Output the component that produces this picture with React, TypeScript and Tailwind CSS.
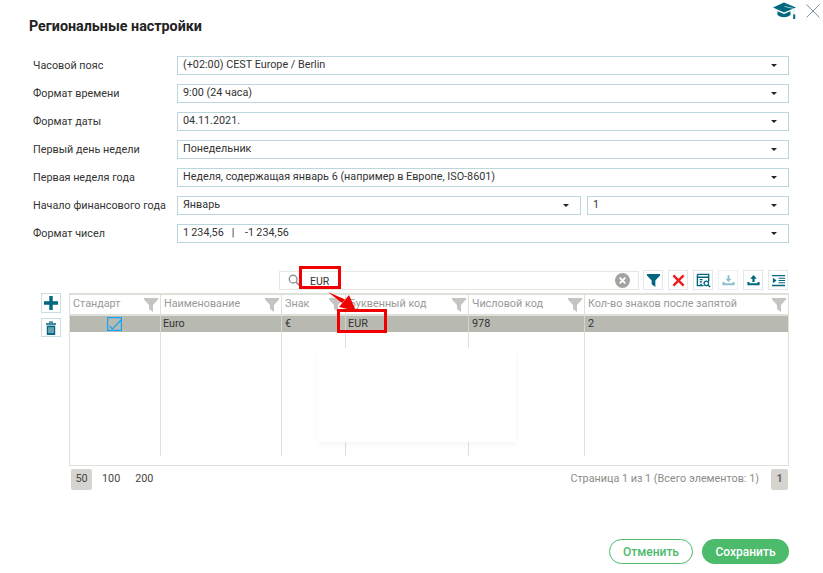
const labelClass = "w-[144px] shrink-0 text-[10.8px] leading-[19px] text-[#333]";

const SelectBox = ({ value, className = "flex-1" }: { value: string; className?: string }) => (
  <div className={`flex h-[19px] items-center justify-between border border-[#bcd6de] pl-[5px] pr-[11px] text-[10.8px] text-[#333] ${className}`}>
    <span className="whitespace-pre">{value}</span>
    <span className="h-0 w-0 border-x-[3px] border-t-[3px] border-x-transparent border-t-[#222]" />
  </div>
);

const settings = [
  { label: "Часовой пояс", value: "(+02:00) CEST Europe / Berlin" },
  { label: "Формат времени", value: "9:00 (24 часа)" },
  { label: "Формат даты", value: "04.11.2021." },
  { label: "Первый день недели", value: "Понедельник" },
  { label: "Первая неделя года", value: "Неделя, содержащая январь 6 (например в Европе, ISO-8601)" },
];

const FunnelIcon = ({ className }: { className: string }) => (
  <svg viewBox="0 0 14 14" className={className}>
    <path d="M0 0h14v1.5L9 7v7L5 11V7L0 1.5z" fill="currentColor" />
  </svg>
);

const ToolButton = ({ children, className = "border-[#e3e9e9]" }: { children: React.ReactNode; className?: string }) => (
  <button type="button" className={`flex h-[20px] w-[20px] items-center justify-center border bg-white ${className}`}>
    {children}
  </button>
);

const columns = [
  { title: "Стандарт", width: "w-[90px]" },
  { title: "Наименование", width: "w-[121px]" },
  { title: "Знак", width: "w-[64px]" },
  { title: "Буквенный код", width: "w-[123px]" },
  { title: "Числовой код", width: "w-[116px]" },
  { title: "Кол-во знаков после запятой", width: "flex-1" },
];

const Toolbar = () => (
  <div className="ml-[279px] flex h-[20px] w-[510px] items-center">
    <div className="flex h-[19px] w-[360px] items-center border border-[#e6e6e2] pl-[8px] pr-[8px]">
      <svg viewBox="0 0 14 14" className="h-[12px] w-[12px] text-[#8f8f8f]">
        <circle cx="6" cy="6" r="4.5" fill="none" stroke="currentColor" strokeWidth="1.6" />
        <path d="M9.5 9.5 13 13" stroke="currentColor" strokeWidth="2" />
      </svg>
      <span className="ml-[10px] flex-1 pt-[4px] text-[10.5px] text-[#333]">EUR</span>
      <svg viewBox="0 0 16 16" className="h-[15px] w-[15px]">
        <circle cx="8" cy="8" r="8" fill="#a3a3a0" />
        <path d="m5 5 6 6m0-6-6 6" stroke="#fff" strokeWidth="2" />
      </svg>
    </div>
    <div className="ml-[4px] flex gap-[5px]">
      <ToolButton>
        <FunnelIcon className="h-[13px] w-[13px] text-[#00677f]" />
      </ToolButton>
      <ToolButton>
        <svg viewBox="0 0 14 14" className="h-[13px] w-[13px]">
          <path d="m1.5 1.5 11 11m0-11-11 11" stroke="#ee1c1c" strokeWidth="2.6" />
        </svg>
      </ToolButton>
      <ToolButton>
        <svg viewBox="0 0 16 16" className="h-[15px] w-[15px] text-[#00677f]">
          <path d="M1.5 1.5h12V9M1.5 1.5v12H8M1.5 4.5h12" fill="none" stroke="currentColor" strokeWidth="1.5" />
          <path d="M4 7h3M4 9.5h2.5M4 12h2.5" stroke="currentColor" strokeWidth="1.2" />
          <circle cx="11" cy="11" r="2.4" fill="none" stroke="currentColor" strokeWidth="1.3" />
          <path d="m12.8 12.8 2.2 2.2" stroke="currentColor" strokeWidth="1.5" />
        </svg>
      </ToolButton>
      <ToolButton className="border-[#edf1f1]">
        <svg viewBox="0 0 16 16" className="h-[15px] w-[15px] text-[#8cc0cc]">
          <path d="M8 9.5 4.8 6H7V2.5h2V6h2.2z" fill="currentColor" />
          <path d="M1.5 9.5v3.5h13V9.5h-2.2v1.5H3.7V9.5z" fill="currentColor" />
        </svg>
      </ToolButton>
      <ToolButton>
        <svg viewBox="0 0 16 16" className="h-[15px] w-[15px] text-[#00677f]">
          <path d="M8 2 11.5 6H9.2v3.5H6.8V6H4.5z" fill="currentColor" />
          <path d="M1.5 9.5v3.5h13V9.5h-2.2v1.5H3.7V9.5z" fill="currentColor" />
        </svg>
      </ToolButton>
      <ToolButton>
        <svg viewBox="0 0 16 16" className="h-[15px] w-[15px] text-[#00677f]">
          <path d="M1 2h14v1.5H1zM1 12.5h14V14H1zM8 5h7v1.2H8zM8 7.4h7v1.2H8zM8 9.8h7V11H8z" fill="currentColor" />
          <path d="M2 5v6l4-3z" fill="currentColor" />
        </svg>
      </ToolButton>
    </div>
  </div>
);

const Grid = () => (
  <div className="ml-[41px] mt-[3px] flex w-[748px] items-start gap-[8px]">
    <div className="flex w-[20px] flex-col gap-[5px]">
      <button type="button" className="flex h-[20px] w-[20px] items-center justify-center border border-[#c9dde2]">
        <svg viewBox="0 0 14 14" className="h-[14px] w-[14px]">
          <path d="M7 0v14M0 7h14" stroke="#00677f" strokeWidth="3.4" />
        </svg>
      </button>
      <button type="button" className="flex h-[19px] w-[20px] items-center justify-center border border-[#c9dde2]">
        <svg viewBox="0 0 12 14" className="h-[14px] w-[12px]">
          <path d="M1 2.2h10v1.6H1zM4 .5h4v1.2H4z" fill="#00677f" />
          <path d="M1.8 4.6h8.4V14H1.8z" fill="#00677f" />
          <path d="M4 6.2v6M6 6.2v6M8 6.2v6" stroke="#fff" strokeWidth="0.8" />
        </svg>
      </button>
    </div>
    <div className="flex h-[173px] flex-1 flex-col border border-[#e0e0da] border-t-2">
      <div className="flex h-[21px] shrink-0 border-b-[2px] border-[#e0e0da]">
        {columns.map((col, i) => (
          <div
            key={col.title}
            className={`flex items-center justify-between pl-[3px] pr-[2px] text-[10.8px] text-[#999] ${col.width} ${i > 0 ? "border-l border-[#e0e0da]" : ""}`}
          >
            <span className="whitespace-nowrap">{col.title}</span>
            <FunnelIcon className="h-[14px] w-[14px] shrink-0 text-[#c4c4c0]" />
          </div>
        ))}
      </div>
      <div className="flex h-[16px] shrink-0 bg-[#b8bab2] text-[10.8px] leading-[16px] text-[#333]">
        <div className="flex w-[90px] items-center justify-center">
          <svg viewBox="0 0 15 14" className="mr-[2px] h-[14px] w-[15px]">
            <path d="M.6.6h13.8v12.8H.6z" fill="none" stroke="#12a5f4" strokeWidth="1.2" />
            <path d="m2.5 9 3 3L14 3" fill="none" stroke="#12a5f4" strokeWidth="1.2" />
          </svg>
        </div>
        <div className="w-[121px] border-l border-[#d5d6d0] pl-[2px]">Euro</div>
        <div className="w-[64px] border-l border-[#d5d6d0] pl-[3px]">€</div>
        <div className="w-[123px] border-l border-[#d5d6d0] pl-[2px]">EUR</div>
        <div className="w-[116px] border-l border-[#d5d6d0] pl-[3px]">978</div>
        <div className="flex-1 border-l border-[#d5d6d0] pl-[3px]">2</div>
      </div>
      <div className="flex h-[124px] shrink-0">
        {columns.map((col, i) => (
          <div key={col.title} className={`${col.width} ${i > 0 ? "border-l border-[#e0e0da]" : ""}`} />
        ))}
      </div>
    </div>
  </div>
);

const Pager = () => (
  <div className="ml-[71px] mt-[3px] flex h-[21px] w-[717px] items-center justify-between text-[10.8px]">
    <div className="flex items-center text-[#444]">
      <span className="flex h-[21px] w-[21px] items-center justify-center rounded-[2px] bg-[#d6d4cf]">50</span>
      <span className="ml-[10px]">100</span>
      <span className="ml-[15px]">200</span>
    </div>
    <div className="flex items-center text-[#8c8c88]">
      <span>Страница 1 из 1 (Всего элементов: 1)</span>
      <span className="ml-[12px] flex h-[21px] w-[17px] items-center justify-center rounded-[2px] bg-[#d6d4cf] font-bold text-[#666]">1</span>
    </div>
  </div>
);

export default function App() {
  return (
    <div className="relative h-[573px] w-[823px] overflow-hidden bg-white font-['Roboto',sans-serif]">
      <div className="flex h-[17px] items-start justify-end gap-[9px] pr-[3px] pt-[2px]">
        <svg viewBox="0 0 24 17" className="h-[17px] w-[24px]">
          <path d="M0 5.5 11 .5l12 5-12 5z" fill="#00677f" />
          <path d="M11.5 4.5 21 6.5V13" fill="none" stroke="#bfe0e8" strokeWidth="0.8" />
          <path d="M4.5 9.2 11 12l6.5-2.8V13c-2 1.6-4.2 2.2-6.5 2.2S6.5 14.6 4.5 13z" fill="#00677f" />
          <path d="M20.2 12.5h2V17h-2z" fill="#00677f" />
        </svg>
        <svg viewBox="0 0 14 14" className="mt-[2px] h-[14px] w-[14px]">
          <path d="m.5.5 13 13m0-13-13 13" stroke="#8094a8" strokeWidth="1" />
        </svg>
      </div>
      <h1 className="ml-[29px] text-[14.3px] font-bold leading-[18px] text-[#222]">Региональные настройки</h1>

      <div className="ml-[33px] mt-[21px] flex w-[756px] flex-col gap-[9px]">
        {settings.map((row) => (
          <div key={row.label} className="flex">
            <span className={labelClass}>{row.label}</span>
            <SelectBox value={row.value} />
          </div>
        ))}
        <div className="flex">
          <span className={labelClass}>Начало финансового года</span>
          <SelectBox value="Январь" className="w-[404px]" />
          <SelectBox value="1" className="ml-[6px] flex-1" />
        </div>
        <div className="flex">
          <span className={labelClass}>Формат чисел</span>
          <SelectBox value={"1\u2009234,56\u00a0\u00a0\u00a0|\u00a0\u00a0\u00a0\u00a0-1\u2009234,56"} />
        </div>
      </div>

      <div className="mt-[27px]">
        <Toolbar />
        <Grid />
        <Pager />
      </div>

      <div className="ml-[609px] mt-[49px] flex w-[180px] gap-[9px]">
        <button type="button" className="h-[25px] w-[84px] rounded-full border border-[#4cbb6c] text-[12px] font-medium text-[#4cbb6c]">
          Отменить
        </button>
        <button type="button" className="h-[25px] w-[87px] rounded-full bg-[#4cbb6c] text-[12px] font-medium text-white">
          Сохранить
        </button>
      </div>

      {/* annotations drawn over the screenshot */}
      <div className="absolute left-[318px] top-[348px] h-[94px] w-[198px] bg-white shadow-[0_3px_6px_rgba(0,0,0,0.04)]" />
      <div className="absolute left-[299px] top-[266px] h-[23px] w-[42px] border-[3px] border-[#f00000]" />
      <div className="absolute left-[337px] top-[309px] h-[24px] w-[50px] border-[3px] border-[#f00000]" />
      <svg viewBox="0 0 823 573" className="pointer-events-none absolute left-0 top-0 h-[573px] w-[823px]">
        <path d="M328 292 345 299.5 342 303z" fill="#f00000" />
        <path d="M356 311 349 295 339 307z" fill="#f00000" />
      </svg>
    </div>
  );
}
